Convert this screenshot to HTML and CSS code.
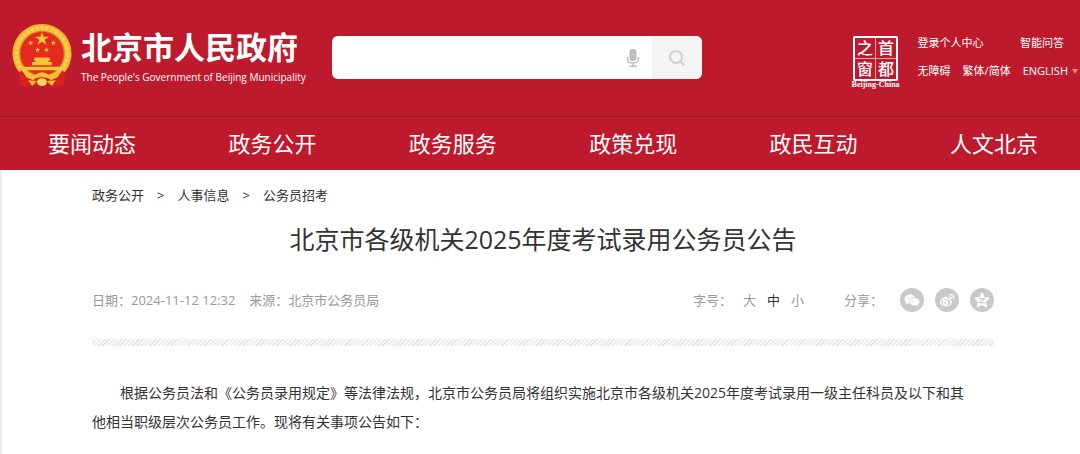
FILE: index.html
```html
<!DOCTYPE html>
<html lang="zh-CN">
<head>
<meta charset="utf-8">
<meta name="viewport" content="width=device-width, initial-scale=1">
<title>北京市各级机关2025年度考试录用公务员公告</title>
<link rel="stylesheet" href="styles.css">
</head>
<body>
<header class="site-header">
  <div class="masthead">
    <a class="brand" href="#">
      <svg class="emblem" viewBox="0 0 62 66" aria-hidden="true">
        <path fill="#d9201d" d="M6 41c1 5 2 8 3 9l-1 11 6 3 7-2h20l7 2 6-3-1-11c1-1 2-4 3-9L45 48H17z"/>
        <path fill="#eeb42e" d="M31 0a30 30 0 0 1 24 48l-9 5-15 4-15-4-9-5A30 30 0 0 1 31 0z"/>
        <circle cx="31" cy="30" r="26" fill="none" stroke="#f6cd50" stroke-width="4" stroke-dasharray="4 1"/>
        <circle cx="31" cy="30" r="22.500" fill="#e62a20" stroke="#c8861c"/>
        <g fill="#f2c737">
          <path d="m31 8 1.700 5H38l-4.200 3.100 1.600 5-4.400-3-4.400 3 1.600-5L24 13h5.300z"/>
          <path d="m19.500 16.500.7 1.900h2l-1.600 1.200.6 2-1.700-1.200-1.700 1.200.6-2-1.600-1.200h2zM42.500 16.500l.7 1.900h2l-1.600 1.200.6 2-1.700-1.200-1.700 1.200.6-2-1.600-1.200h2zM26.500 23.500l.7 1.900h2l-1.600 1.200.6 2-1.700-1.200-1.700 1.200.6-2-1.600-1.200h2zM35.500 23.500l.7 1.900h2l-1.600 1.200.6 2-1.700-1.200-1.700 1.200.6-2-1.600-1.200h2z"/>
          <path d="M23.500 34h15l1 3h-17zM24.500 37h13v2h-13zM21 38.500h20V42H21zM12 43.500h38L48 47H14z"/>
        </g>
        <path fill="#d9201d" d="m10 47 9 9 8-4h8l8 4 9-9 3 4-5 12-12-3-7 2-7-2-12 3-5-12z"/>
        <path fill="#f3bf39" d="m10 46 8 5 6 1c4-4 10-4 14 0l6-1 8-5-5 8-7 3c-3-4-15-4-18 0l-7-3z"/>
        <ellipse cx="31" cy="59" rx="5" ry="4" fill="#f8d45a"/>
        <path fill="#f1bd34" d="m17 57 9 1-5 5zm28 0-9 1 5 5z"/>
      </svg>
      <span class="brand-text">
        <span class="brand-name">北京市人民政府</span>
        <span class="brand-en">The People's Government of Beijing Municipality</span>
      </span>
    </a>
    <form class="search" role="search">
      <input class="search-input" type="text" aria-label="搜索">
      <button class="voice" type="button" aria-label="语音输入">
        <svg width="14" height="20" viewBox="0 0 14 20" aria-hidden="true">
          <rect x="3.500" y="1" width="7" height="12" rx="3" fill="#bebebe"/>
          <path d="M1.700 9v2.500c0 2 1.800 3.500 5.300 3.500s5.300-1.500 5.300-3.500V9M7 15v3M3 18.200h8" fill="none" stroke="#bebebe" stroke-width="1.500"/>
        </svg>
      </button>
      <button class="search-btn" type="submit" aria-label="搜索">
        <svg width="18" height="18" viewBox="0 0 18 18" fill="none" stroke="#cfcfcf" stroke-width="2" aria-hidden="true">
          <circle cx="8" cy="8" r="6"/><path d="m12.200 12.200 4 4"/>
        </svg>
      </button>
    </form>
    <a class="seal" href="#">
      <span class="seal-box"><span>之</span><span>首</span><span>窗</span><span>都</span></span>
      <span class="seal-caption">Beijing-China</span>
    </a>
    <nav class="tools" aria-label="工具">
      <div class="tools-row tools-top"><a href="#">登录个人中心</a><a href="#">智能问答</a></div>
      <div class="tools-row"><a href="#">无障碍</a><a href="#">繁体/简体</a><a class="lang" href="#">ENGLISH<svg width="6" height="5" viewBox="0 0 6 5" aria-hidden="true"><path d="M0 0h6L3 5z" fill="#d98f6c"/></svg></a></div>
    </nav>
  </div>
  <nav class="main-nav" aria-label="主导航">
    <a href="#">要闻动态</a><a href="#">政务公开</a><a href="#">政务服务</a><a href="#">政策兑现</a><a href="#">政民互动</a><a href="#">人文北京</a>
  </nav>
</header>
<main class="page">
  <nav class="crumbs" aria-label="当前位置">
    <a href="#">政务公开</a><span>&gt;</span><a href="#">人事信息</a><span>&gt;</span><a href="#">公务员招考</a>
  </nav>
  <h1 class="title">北京市各级机关2025年度考试录用公务员公告</h1>
  <div class="meta">
    <span>日期：2024-11-12 12:32</span>
    <span class="source">来源：北京市公务员局</span>
    <div class="font-size">
      <span>字号：</span>
      <button type="button">大</button><button class="active" type="button">中</button><button type="button">小</button>
    </div>
    <div class="share">
      <span>分享：</span>
      <a href="#" aria-label="微信">
        <svg width="24" height="24" viewBox="0 0 24 24" aria-hidden="true">
          <circle cx="12" cy="12" r="12" fill="#c9c9c9"/>
          <ellipse cx="10" cy="11" rx="5.500" ry="4.500" fill="#fff"/>
          <path fill="#fff" d="m6.200 13-.5 3.200 3-1.400z"/>
          <ellipse cx="14.700" cy="13.800" rx="5" ry="4" fill="#fff" stroke="#c9c9c9" stroke-width=".7"/>
          <path fill="#fff" d="m16 17 2 1.600-.4-2.400z"/>
          <g fill="#c9c9c9"><circle cx="8" cy="9.700" r=".6"/><circle cx="12" cy="9.700" r=".6"/><circle cx="13" cy="12.800" r=".5"/><circle cx="16.400" cy="12.800" r=".5"/></g>
        </svg>
      </a>
      <a href="#" aria-label="微博">
        <svg width="24" height="24" viewBox="0 0 24 24" aria-hidden="true">
          <circle cx="12" cy="12" r="12" fill="#c9c9c9"/>
          <path fill="#fff" d="M10.300 8.700c1.200-.4 1.800.2 1.500 1.500 1.800-.7 3.400-.5 3 1.300 1.300.4 2.300 1.200 2.300 2.400 0 2.300-3 4.300-6.200 4.300S5 16.600 5 14.200c0-2.200 3-4.900 5.300-5.500z"/>
          <ellipse cx="10.900" cy="14.200" rx="4.500" ry="2.900" fill="#c9c9c9"/>
          <ellipse cx="10.500" cy="14.400" rx="2.900" ry="2.300" fill="#fff"/>
          <circle cx="9.900" cy="14.900" r=".9" fill="#c9c9c9"/>
          <path d="M14.200 6.700c3-.6 5.100 1.800 4.300 4.700M14.400 9c1.400-.2 2.300.7 2 2" fill="none" stroke="#fff" stroke-width="1.200"/>
        </svg>
      </a>
      <a href="#" aria-label="QQ空间">
        <svg width="24" height="24" viewBox="0 0 24 24" aria-hidden="true">
          <circle cx="12" cy="12" r="12" fill="#c9c9c9"/>
          <path fill="#fff" stroke="#fff" stroke-linejoin="round" stroke-width="1.500" d="m12 5 2 4.700 5 .5-3.800 3.300 1.200 5-4.400-2.700-4.400 2.700 1.200-5L5 10.200l5-.5z"/>
          <path d="M9 10.800c2-.4 4-.4 5.600 0L9.600 14.600c1.700.4 3.600.4 5.400 0" fill="none" stroke="#c9c9c9" stroke-width="1.200"/>
        </svg>
      </a>
    </div>
  </div>
  <div class="divider"></div>
  <article class="article">
    <p>根据公务员法和《公务员录用规定》等法律法规，北京市公务员局将组织实施北京市各级机关2025年度考试录用一级主任科员及以下和其<br>他相当职级层次公务员工作。现将有关事项公告如下：</p>
  </article>
</main>
</body>
</html>
```
FILE: styles.css
```css
* { box-sizing: border-box; }

body {
  margin: 0;
  min-height: 100vh;
  display: flex;
  flex-direction: column;
  background: #fff;
  color: #333;
  font-family: "Open Sans", "Noto Sans CJK SC", sans-serif;
  font-size: 13px;
}

a { color: inherit; text-decoration: none; }

button {
  padding: 0;
  border: 0;
  background: none;
  color: inherit;
  font: inherit;
  cursor: pointer;
}

svg { display: block; }

.site-header { background: #bd1b2d; color: #fff; }

.masthead {
  display: flex;
  align-items: flex-start;
  padding: 24px 2px 27px 11px;
}

.brand { display: flex; flex-shrink: 0; gap: 8px; }
.emblem { width: 62px; height: 65px; }
.brand-text { display: flex; flex-direction: column; padding-top: 4px; white-space: nowrap; }
.brand-name { font-size: 31px; line-height: 38px; font-weight: 700; }
.brand-en { font-size: 10px; line-height: 22px; }

.search {
  display: flex;
  flex: 0 1 370px;
  height: 43px;
  margin: 12px auto 0 26px;
  border-radius: 6px;
  background: #fff;
  overflow: hidden;
}
.search-input {
  flex: 1;
  min-width: 0;
  padding: 0 12px;
  border: 0;
  outline: 0;
  background: none;
  font: inherit;
}
.voice { display: grid; place-items: center; width: 38px; }
.search-btn { display: grid; place-items: center; width: 50px; background: #f4f4f4; }

.seal { display: flex; flex-direction: column; align-items: center; margin-top: 12px; }
.seal-box {
  display: grid;
  grid-template-columns: 20px 20px;
  gap: 1px;
  border: 2px solid #fff;
  border-radius: 2px;
  background: linear-gradient(#e9a9b0, #e9a9b0) center / 1px 100% no-repeat,
    linear-gradient(#e9a9b0, #e9a9b0) center / 100% 1px no-repeat;
  font-size: 16px;
  font-weight: 500;
  line-height: 20px;
  text-align: center;
}
.seal-caption {
  font-family: "Liberation Serif", serif;
  font-size: 8px;
  font-weight: 700;
  line-height: 8px;
}

.tools { margin: 5px 0 0 18px; font-size: 11px; line-height: 28px; white-space: nowrap; }
.tools-row { display: flex; gap: 12px; }
.tools-top { justify-content: space-between; padding-right: 14px; }
.lang { display: flex; align-items: center; gap: 4px; }

.main-nav {
  display: flex;
  justify-content: space-between;
  padding: 0 42px 0 48px;
  border-top: 1px solid #a61524;
  font-size: 22px;
  line-height: 53px;
}

.page {
  flex: 1;
  padding: 15px 86px 0 90px;
  border-left: 2px solid #eee;
}

.crumbs { display: flex; gap: 13px; line-height: 20px; }

.title {
  margin: 12px 0 0;
  font-size: 25px;
  font-weight: 400;
  line-height: 44px;
  text-align: center;
}

.meta {
  display: flex;
  align-items: center;
  margin-top: 27px;
  line-height: 24px;
  color: #999;
}
.source { margin-left: 14px; }
.font-size { display: flex; gap: 11px; margin-left: auto; }
.active { color: #333; }
.share { display: flex; gap: 11px; margin-left: 40px; }
.share span { margin-right: 6px; }

.divider {
  height: 7px;
  margin-top: 27px;
  background: repeating-linear-gradient(135deg, #e4e4e4 0 1px, #f8f8f8 1px 3px);
}

.article { margin-top: 32px; font-size: 14px; line-height: 29px; }
.article p { margin: 0; text-indent: 2em; }
```
